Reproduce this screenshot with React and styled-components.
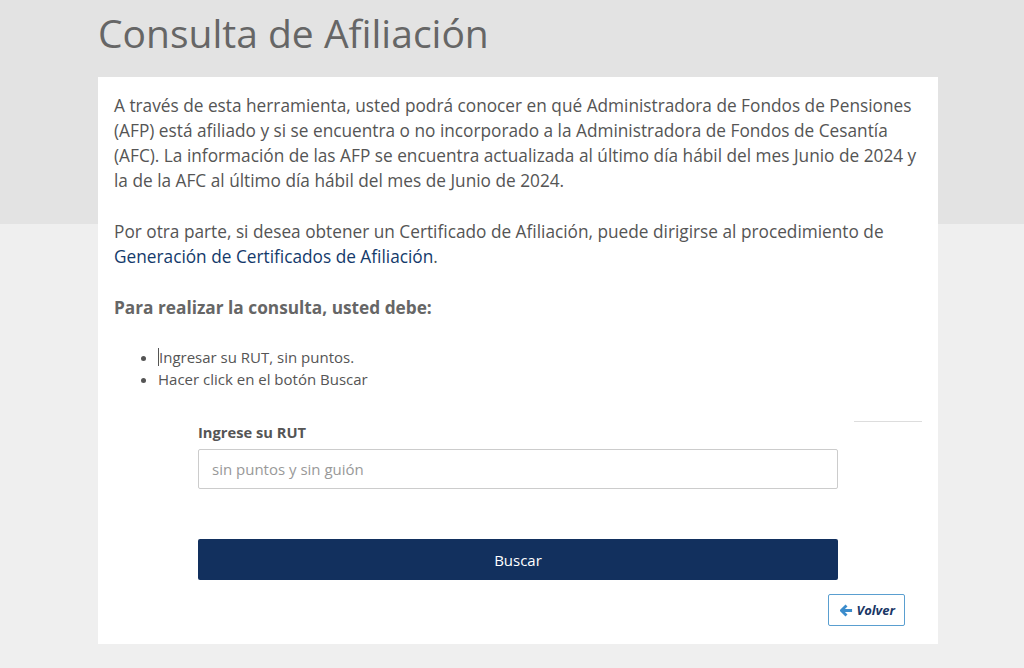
import React from 'react';
import styled, { createGlobalStyle } from 'styled-components';

const GlobalStyle = createGlobalStyle`
  html, body {
    margin: 0;
    padding: 0;
    background: #efefef;
    font-family: "Open Sans", "Liberation Sans", sans-serif;
    color: #555;
  }
  * { box-sizing: border-box; }
`;

export default function App() {
  return (
    <Page>
      <GlobalStyle />
      <Band />
      <Wrapper>
        <Title>Consulta de Afiliación</Title>
        <Card>
          <Text>
            A través de esta herramienta, usted podrá conocer en qué Administradora de Fondos de Pensiones
            (AFP) está afiliado y si se encuentra o no incorporado a la Administradora de Fondos de Cesantía
            (AFC). La información de las AFP se encuentra actualizada al último día hábil del mes Junio de 2024 y
            la de la AFC al último día hábil del mes de Junio de 2024.
          </Text>
          <Text>
            Por otra parte, si desea obtener un Certificado de Afiliación, puede dirigirse al procedimiento de{' '}
            <Link href="#">Generación de Certificados de Afiliación</Link>.
          </Text>
          <Heading>Para realizar la consulta, usted debe:</Heading>
          <Steps>
            <li><Caret />Ingresar su RUT, sin puntos.</li>
            <li>Hacer click en el botón Buscar</li>
          </Steps>
          <Divider />
          <Form>
            <Label htmlFor="rut">Ingrese su RUT</Label>
            <Input id="rut" placeholder="sin puntos y sin guión" />
            <SearchButton>Buscar</SearchButton>
          </Form>
          <Actions>
            <BackButton>
              <svg width="13" height="13" viewBox="0 0 14 14">
                <path d="M7 1.5 L1.5 7 L7 12.5 M1.8 7 H13" fill="none" stroke="#3b8ccc" strokeWidth="3" strokeLinejoin="round" />
              </svg>
              Volver
            </BackButton>
          </Actions>
        </Card>
      </Wrapper>
    </Page>
  );
}

const Page = styled.div`
  position: relative;
  min-height: 668px;
`;

const Band = styled.div`
  position: absolute;
  top: 0;
  left: 0;
  right: 0;
  height: 224px;
  background: #e3e3e3;
`;

const Wrapper = styled.div`
  position: relative;
  width: 840px;
  margin-left: 98px;
  padding-bottom: 24px;
`;

const Title = styled.h1`
  margin: 0;
  height: 77px;
  padding-top: 12px;
  font-size: 39px;
  font-weight: 400;
  line-height: 1.1;
  color: #666;
`;

const Card = styled.div`
  background: #fff;
  padding: 16px 16px 16px;
  height: 567px;
`;

const Text = styled.p`
  margin: 0 0 26px;
  font-size: 17.25px;
  line-height: 25px;
  color: #555;
`;

const Link = styled.a`
  color: #143a6b;
  text-decoration: none;
`;

const Heading = styled.p`
  margin: 2px 0 26px;
  font-size: 17.25px;
  line-height: 25px;
  font-weight: 700;
  color: #666;
`;

const Steps = styled.ul`
  margin: 0;
  padding-left: 44px;
  font-size: 15px;
  line-height: 22px;
  color: #555;
`;

const Caret = styled.span`
  display: inline-block;
  width: 1px;
  height: 18px;
  background: #555;
  vertical-align: -3px;
`;

const Divider = styled.div`
  margin: 31px 0 0 auto;
  width: 68px;
  border-top: 1px solid #ddd;
`;

const Form = styled.div`
  width: 640px;
  margin: 0 auto;
  display: flex;
  flex-direction: column;
`;

const Label = styled.label`
  font-size: 14.7px;
  font-weight: 700;
  color: #555;
  line-height: 20px;
  margin-bottom: 7px;
`;

const Input = styled.input`
  height: 40px;
  border: 1px solid #ccc;
  border-radius: 2px;
  padding: 0 13px;
  font-family: inherit;
  font-size: 15px;
  color: #555;
  &::placeholder { color: #999; }
`;

const SearchButton = styled.button`
  margin-top: 50px;
  height: 41px;
  border: none;
  border-radius: 2px;
  background: #12305e;
  color: #fff;
  font-family: inherit;
  font-size: 15px;
`;

const Actions = styled.div`
  display: flex;
  justify-content: flex-end;
  padding-right: 17px;
  margin-top: 14px;
`;

const BackButton = styled.button`
  display: flex;
  align-items: center;
  gap: 3px;
  height: 32px;
  padding: 0 9px 0 11px;
  border: 1px solid #5a9fd0;
  border-radius: 2px;
  background: #fff;
  color: #1a3766;
  font-family: inherit;
  font-size: 13px;
  font-style: italic;
  font-weight: 700;
`;
